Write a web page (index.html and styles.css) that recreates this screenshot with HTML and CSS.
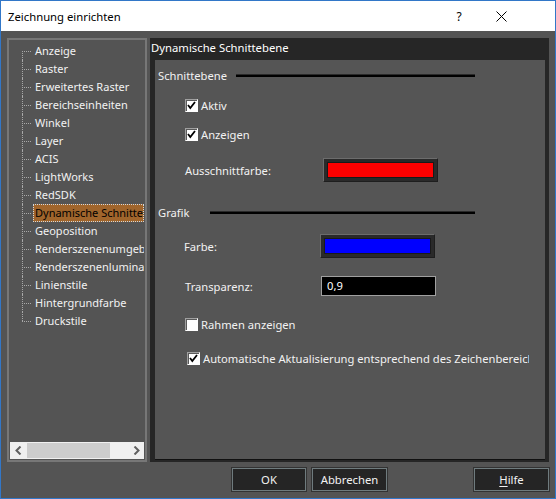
FILE: index.html
```html
<!DOCTYPE html>
<html lang="de">
<head>
<meta charset="utf-8">
<title>Zeichnung einrichten</title>
<link rel="stylesheet" href="styles.css">
</head>
<body>
<div class="window">
  <div class="titlebar">
    <span class="title">Zeichnung einrichten</span>
    <span class="tb-help">?</span>
    <span class="tb-close">
      <svg width="11" height="11" viewBox="0 0 11 11"><path d="M0.5 0.5 L10.5 10.5 M10.5 0.5 L0.5 10.5" stroke="#000" stroke-width="1" fill="none"/></svg>
    </span>
  </div>
  <div class="body">
    <div class="main">
      <div class="tree">
        <ul class="tree-list">
          <li><span>Anzeige</span></li>
          <li><span>Raster</span></li>
          <li><span>Erweitertes Raster</span></li>
          <li><span>Bereichseinheiten</span></li>
          <li><span>Winkel</span></li>
          <li><span>Layer</span></li>
          <li><span>ACIS</span></li>
          <li><span>LightWorks</span></li>
          <li><span>RedSDK</span></li>
          <li class="sel"><span>Dynamische Schnittebene</span></li>
          <li><span>Geoposition</span></li>
          <li><span>Renderszenenumgebung</span></li>
          <li><span>Renderszenenluminanz</span></li>
          <li><span>Linienstile</span></li>
          <li><span>Hintergrundfarbe</span></li>
          <li><span>Druckstile</span></li>
        </ul>
        <div class="hscroll">
          <span class="arr"><svg width="8" height="9" viewBox="0 0 8 9"><path d="M5.5 0.5 L1.5 4.5 L5.5 8.5" stroke="#606060" stroke-width="2" fill="none"/></svg></span>
          <span class="track"><span class="thumb"></span></span>
          <span class="arr"><svg width="8" height="9" viewBox="0 0 8 9"><path d="M2.5 0.5 L6.5 4.5 L2.5 8.5" stroke="#606060" stroke-width="2" fill="none"/></svg></span>
        </div>
      </div>
      <div class="panel">
        <div class="panel-head">Dynamische Schnittebene</div>
        <div class="panel-inner">
          <div class="section s1">
            <span class="sec-label w1">Schnittebene</span>
            <span class="sec-line"></span>
          </div>
          <div class="row r-aktiv">
            <span class="cb checked"><svg width="11" height="11" viewBox="0 0 11 11"><path d="M2 5 L4.3 8 L9 2" stroke="#000" stroke-width="1.8" fill="none"/></svg></span>
            <span>Aktiv</span>
          </div>
          <div class="row r-anz">
            <span class="cb checked"><svg width="11" height="11" viewBox="0 0 11 11"><path d="M2 5 L4.3 8 L9 2" stroke="#000" stroke-width="1.8" fill="none"/></svg></span>
            <span>Anzeigen</span>
          </div>
          <div class="row r-aus">
            <span class="lbl lw1">Ausschnittfarbe:</span>
            <span class="swatch"><span class="fill red"></span></span>
          </div>
          <div class="section s2">
            <span class="sec-label w2">Grafik</span>
            <span class="sec-line"></span>
          </div>
          <div class="row r-farbe">
            <span class="lbl lw2">Farbe:</span>
            <span class="swatch"><span class="fill blue"></span></span>
          </div>
          <div class="row r-trans">
            <span class="lbl lw3">Transparenz:</span>
            <span class="input">0,9</span>
          </div>
          <div class="row r-rahmen">
            <span class="cb"></span>
            <span>Rahmen anzeigen</span>
          </div>
          <div class="row r-auto">
            <span class="cb checked"><svg width="11" height="11" viewBox="0 0 11 11"><path d="M2 5 L4.3 8 L9 2" stroke="#000" stroke-width="1.8" fill="none"/></svg></span>
            <span class="clip">Automatische Aktualisierung entsprechend des Zeichenbereichs</span>
          </div>
        </div>
      </div>
    </div>
    <div class="buttons">
      <span class="btn b-ok">OK</span>
      <span class="btn b-cancel">Abbrechen</span>
      <span class="btn b-help"><u>H</u>ilfe</span>
    </div>
  </div>
</div>
</body>
</html>
```

FILE: styles.css
```css
html, body {
  margin: 0;
  padding: 0;
}
body {
  font-family: "Noto Sans", "Open Sans", sans-serif;
  font-size: 11px;
  background: #545454;
}
.window {
  width: 556px;
  height: 499px;
  box-sizing: border-box;
  border: 1px solid #3277c8;
  display: flex;
  flex-direction: column;
  background: #545454;
  overflow: hidden;
}
.titlebar {
  height: 30px;
  flex: none;
  background: #fff;
  display: flex;
  align-items: center;
  padding-left: 7px;
  padding-right: 31px;
  color: #000;
}
.title {
  font-size: 11.3px;
}
.tb-help {
  margin-left: auto;
  width: 30px;
  margin-right: 4px;
  text-align: center;
  font-size: 12px;
}
.tb-close {
  width: 46px;
  display: flex;
  justify-content: center;
  align-items: center;
}
.body {
  flex: 1;
  display: flex;
  flex-direction: column;
  padding: 7px 6px 7px 6px;
  color: #f2f2f2;
}
.main {
  height: 424px;
  display: flex;
  gap: 3px;
}
.tree {
  width: 140px;
  box-sizing: border-box;
  border: 2px solid #777;
  padding: 1px;
  display: flex;
  flex-direction: column;
}
.tree-list {
  flex: 1;
  list-style: none;
  margin: 0;
  padding: 1px 0 0 0;
  overflow: hidden;
}
.tree-list li {
  position: relative;
  height: 18px;
  line-height: 18px;
  padding-left: 23px;
  white-space: nowrap;
  overflow: hidden;
  font-size: 11px;
}
.tree-list li::before {
  content: "";
  position: absolute;
  left: 12px;
  top: 9px;
  width: 9px;
  border-top: 1px dotted #a8a8a8;
}
.tree-list li::after {
  content: "";
  position: absolute;
  left: 12px;
  top: 0;
  bottom: 0;
  border-left: 1px dotted #a8a8a8;
}
.tree-list li:first-child::after {
  top: 9px;
}
.tree-list li:last-child::after {
  bottom: 9px;
}
.tree-list li span {
  display: inline-block;
  vertical-align: top;
  box-sizing: border-box;
  max-width: 100%;
  overflow: hidden;
  padding: 0 2px;
  height: 18px;
}
.tree-list li.sel span {
  background: #a0652c;
  color: #000;
  outline: 1px dotted #cfd8e0;
  outline-offset: -1px;
}
.hscroll {
  height: 17px;
  flex: none;
  background: #f0f0f0;
  display: flex;
  align-items: center;
}
.arr {
  width: 17px;
  height: 17px;
  display: flex;
  align-items: center;
  justify-content: center;
}
.track {
  flex: 1;
  height: 15px;
  display: flex;
}
.thumb {
  width: 83px;
  height: 15px;
  background: #cdcdcd;
}
.panel {
  flex: 1;
  background: #262626;
  display: flex;
  flex-direction: column;
}
.panel-head {
  height: 20px;
  line-height: 20px;
  padding-left: 1px;
  color: #fff;
  font-size: 11.3px;
}
.panel-inner {
  flex: 1;
  margin: 2px 4px 2px 5px;
  background: #555;
  border-bottom: 1px solid #111;
  display: flex;
  flex-direction: column;
  font-size: 11.2px;
}
.section {
  height: 20px;
  display: flex;
  align-items: center;
  padding-left: 3px;
  width: 317px;
}
.sec-label {
  flex: none;
}
.w1 { width: 78px; }
.w2 { width: 52px; }
.sec-line {
  flex: 1;
  height: 0;
  border-top: 1px solid #2a2a2a;
  border-bottom: 2px solid #000;
  margin-top: 1px;
}
.s1 { margin-top: 5px; }
.s2 { margin-top: 20px; }
.row {
  display: flex;
  align-items: center;
  height: 20px;
  padding-left: 30px;
  white-space: nowrap;
}
.r-aktiv { margin-top: 10px; }
.r-anz { margin-top: 9px; }
.r-aus { margin-top: 14px; height: 24px; }
.r-farbe { margin-top: 12px; height: 24px; padding-left: 29px; }
.r-trans { margin-top: 18px; }
.r-rahmen { margin-top: 18px; }
.r-auto { margin-top: 14px; padding-left: 32px; overflow: hidden; width: 342px; }
.cb {
  flex: none;
  width: 13px;
  height: 13px;
  box-sizing: border-box;
  background: #fff;
  border: 1px solid;
  border-color: #a0a0a0 #fff #fff #a0a0a0;
  box-shadow: inset 1px 1px 0 #5a5a5a;
  margin-right: 3px;
  display: flex;
  align-items: center;
  justify-content: center;
}
.lbl { flex: none; }
.lw1 { width: 138px; }
.lw2 { width: 136px; }
.lw3 { width: 136px; }
.swatch {
  width: 115px;
  height: 24px;
  box-sizing: border-box;
  background: #2a2a2a;
  border: 1px solid;
  border-color: #6c6c6c #1e1e1e #1e1e1e #6c6c6c;
  padding: 3px;
  display: flex;
}
.fill {
  flex: 1;
  border: 1px solid #1a1a1a;
}
.red { background: #ff0000; }
.blue { background: #0000ff; }
.input {
  width: 115px;
  height: 20px;
  box-sizing: border-box;
  border: 1px solid #a0a0a0;
  background: #000;
  color: #fff;
  padding-left: 5px;
  line-height: 18px;
}
.buttons {
  height: 23px;
  margin-top: 6px;
  display: flex;
  font-size: 11.3px;
}
.btn {
  height: 23px;
  box-sizing: border-box;
  background: #252525;
  border: 1px solid #6f7b7e;
  box-shadow: 0 0 0 1px #333;
  color: #f2f2f2;
  display: flex;
  align-items: center;
  justify-content: center;
}
.b-ok { width: 74px; margin-left: 225px; }
.b-cancel { width: 75px; margin-left: 6px; }
.b-help { width: 75px; margin-left: auto; }
.b-help u { text-decoration-thickness: 1px; text-underline-offset: 2px; }
```
